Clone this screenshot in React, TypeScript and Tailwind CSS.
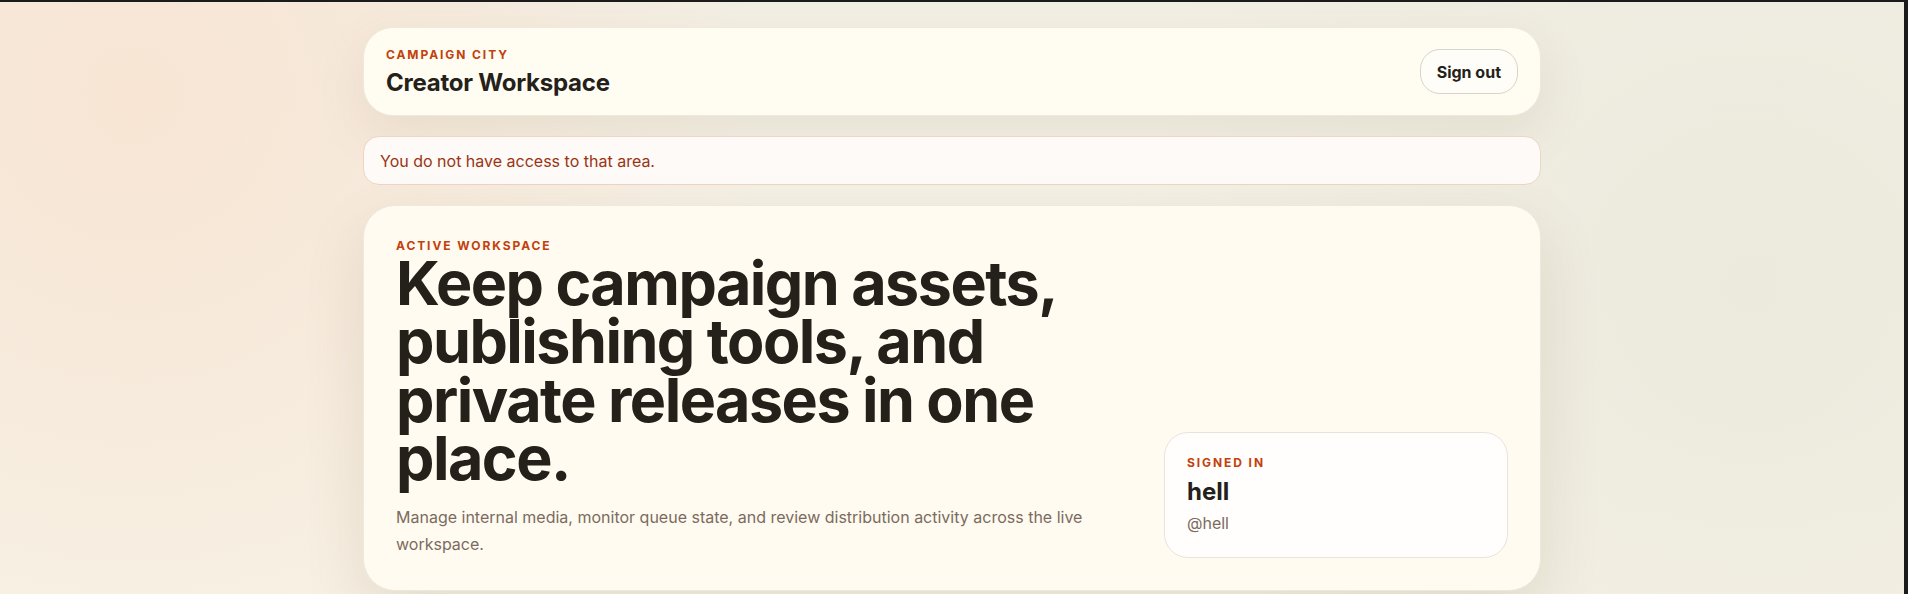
import React from 'react'

const font = { fontFamily: 'Inter, "Noto Sans", sans-serif' }

function Eyebrow({ children }: { children: React.ReactNode }) {
  return (
    <p className="text-[12px] font-bold uppercase leading-4 tracking-[0.16em] text-[#c2410c]">
      {children}
    </p>
  )
}

export default function App() {
  return (
    <div
      style={font}
      className="min-h-screen border-t-[2px] border-r-[4px] border-[#1b1b1b] bg-[radial-gradient(circle_at_7%_16%,#f8e5d4_0%,rgba(248,229,212,0)_34%),radial-gradient(circle_at_92%_48%,#ebeadd_0%,rgba(235,234,221,0)_36%),linear-gradient(180deg,#f3efe4_0%,#f7f2e6_100%)] text-[#24201a]"
    >
      <div className="mx-auto flex w-[1178px] flex-col gap-5 pt-[25px]">
        {/* Header */}
        <header className="flex h-[89px] items-center justify-between rounded-[30px] border border-[#efe9dc] bg-[#fffcf2] px-[22px] shadow-[0_18px_50px_rgba(120,95,60,0.10)]">
          <div className="flex flex-col gap-[6px] pt-[1px]">
            <Eyebrow>Campaign City</Eyebrow>
            <h1 className="text-[24px] font-bold leading-7 tracking-[-0.01em] text-[#24201a]">
              Creator Workspace
            </h1>
          </div>
          <button className="h-[45px] rounded-[20px] border border-[#d9d4cb] bg-[#fffdf8] px-[16px] text-[16px] font-bold text-[#24201a]">
            Sign out
          </button>
        </header>

        {/* Alert */}
        <div className="flex h-[49px] items-center rounded-[16px] border border-[#f0d4c4] bg-[#fdfaf7] px-4 text-[16px] text-[#9a3412]">
          You do not have access to that area.
        </div>

        {/* Main */}
        <section className="flex items-end justify-between rounded-[32px] border border-[#efe9dc] bg-[#fffbf1] p-8 shadow-[0_24px_60px_rgba(120,95,60,0.14)]">
          <div className="max-w-3xl">
            <Eyebrow>Active Workspace</Eyebrow>
            <h2 className="text-[61px] font-bold leading-[58.4px] tracking-[-0.025em] text-[#24201a]">
              Keep campaign assets, publishing tools, and private releases in one place.
            </h2>
            <p className="mt-4 text-base leading-[27px] text-[#7b6b5e]">
              Manage internal media, monitor queue state, and review distribution activity across the live workspace.
            </p>
          </div>
          <div className="w-[348px] rounded-[24px] border border-[#e9e3da] bg-[#fffefc] px-[22px] py-[22px]">
            <Eyebrow>Signed in</Eyebrow>
            <p className="mt-[6px] text-[24px] font-bold leading-[30px] text-[#24201a]">hell</p>
            <p className="mt-[4px] text-[16px] leading-6 text-[#7b6b5e]">@hell</p>
          </div>
        </section>
      </div>
    </div>
  )
}
